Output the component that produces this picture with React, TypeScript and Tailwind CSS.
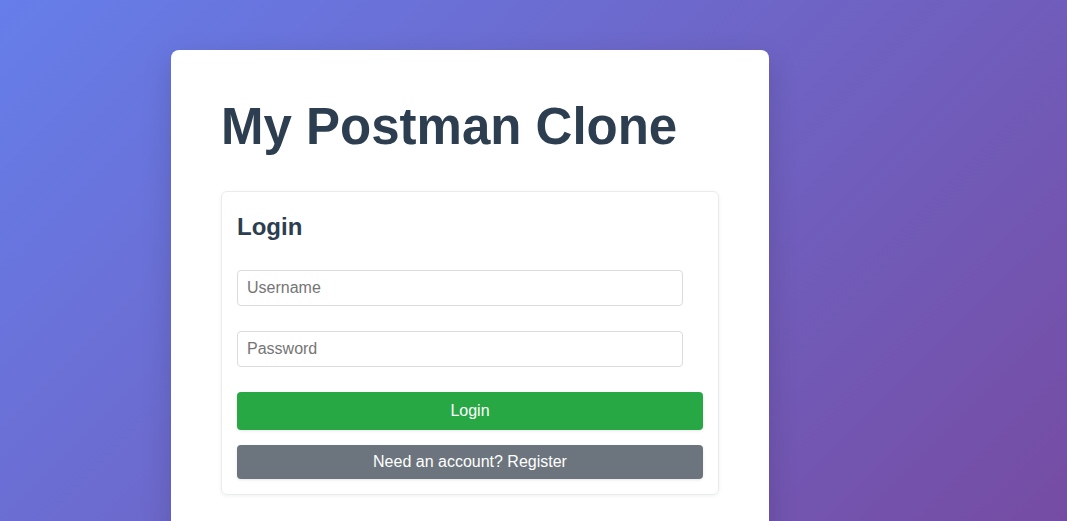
const App = () => {
  return (
    <div
      className="min-h-screen bg-[linear-gradient(135deg,#667eea_0%,#764ba2_100%)] pt-[50px] pl-[171px]"
      style={{ fontFamily: '"Liberation Sans", Arial, sans-serif' }}
    >
      <div className="w-[598px] bg-white rounded-lg shadow-[0_10px_30px_rgba(0,0,0,0.15)] px-[50px] pt-[47px] pb-[50px]">
        <h1 className="text-[51px] leading-[59px] font-bold text-[#2c3e50] mb-[35px]">
          My Postman Clone
        </h1>
        <div className="border border-[#e9ecef] rounded-md shadow-[0_1px_4px_rgba(0,0,0,0.06)] px-[15px] pt-[21px] pb-[15px]">
          <h2 className="text-[24px] leading-[28px] font-bold text-[#2c3e50] mb-[29px]">
            Login
          </h2>
          <input
            type="text"
            placeholder="Username"
            className="block w-[446px] h-[36px] border border-[#dcdcdc] rounded px-[9px] text-[16px] text-[#333] placeholder:text-[#757575] outline-none mb-[25px]"
          />
          <input
            type="password"
            placeholder="Password"
            className="block w-[446px] h-[36px] border border-[#dcdcdc] rounded px-[9px] text-[16px] text-[#333] placeholder:text-[#757575] outline-none mb-[25px]"
          />
          <button className="block w-full h-[38px] bg-[#28a745] text-white text-[16px] rounded mb-[15px] shadow-[0_1px_3px_rgba(0,0,0,0.1)]">
            Login
          </button>
          <button className="block w-full h-[34px] bg-[#6c757d] text-white text-[16px] rounded shadow-[0_1px_3px_rgba(0,0,0,0.1)]">
            Need an account? Register
          </button>
        </div>
      </div>
    </div>
  );
};

export default App;
